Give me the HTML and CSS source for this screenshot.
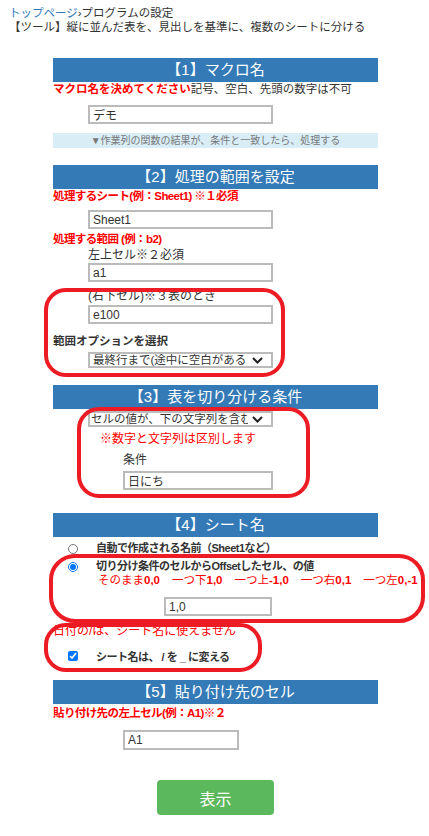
FILE: index.html
```html
<!DOCTYPE html>
<html>
	<head>
		<meta charset="UTF-8" />
		<title>縦に並んだ表を、見出しを基準に、複数のシートに分ける</title>
		<link rel="stylesheet" href="styles.css">
	</head>
	<body>
		<div class="crumb"><a href="javascript:void(0);">トップページ</a>›プログラムの設定</div>
		<div class="lead">【ツール】縦に並んだ表を、見出しを基準に、複数のシートに分ける</div>

		<form class="form" onsubmit="return false;">
			<!-- 1 -->
			<h2 class="sec-title">【1】マクロ名</h2>
			<p class="line"><span class="red-b">マクロ名を決めてください</span>記号、空白、先頭の数字は不可</p>
			<input type="text" class="txt w185 sheet-in" value="デモ">
			<div class="info">▼作業列の関数の結果が、条件と一致したら、処理する</div>

			<!-- 2 -->
			<h2 class="sec-title mt17">【2】処理の範囲を設定</h2>
			<p class="line red-b">処理するシート(例：Sheet1) ※１必須</p>
			<input type="text" class="txt w185 in-sheet" value="Sheet1">
			<p class="line red-b range-t">処理する範囲 (例：b2)</p>
			<p class="line sub lt">左上セル※２必須</p>
			<input type="text" class="txt w185 in-a1" value="a1">
			<p class="line sub rb">(右下セル)※３表のとき</p>
			<input type="text" class="txt w185 in-e" value="e100">
			<p class="line dark-b opt">範囲オプションを選択</p>
			<div class="sel w185 sel-range">
				<select>
					<option>最終行まで(途中に空白があると途中まで)</option>
				</select>
				<svg class="chev" width="11" height="7" viewBox="0 0 11 7"><path d="M1 1 L5.5 5.5 L10 1" fill="none" stroke="#222" stroke-width="2"/></svg>
			</div>

			<!-- 3 -->
			<h2 class="sec-title mt17">【3】表を切り分ける条件</h2>
			<div class="sel w185 sel-cond">
				<select>
					<option>セルの値が、下の文字列を含む</option>
				</select>
				<svg class="chev" width="11" height="7" viewBox="0 0 11 7"><path d="M1 1 L5.5 5.5 L10 1" fill="none" stroke="#222" stroke-width="2"/></svg>
			</div>
			<p class="line red warn">※数字と文字列は区別します</p>
			<p class="line cond-t">条件</p>
			<input type="text" class="txt in-cond" value="日にち">

			<!-- 4 -->
			<h2 class="sec-title mt23">【4】シート名</h2>
			<label class="opt-row r1"><input type="radio" name="sname">自動で作成される名前（Sheet1など）</label>
			<label class="opt-row r2"><input type="radio" name="sname" checked>切り分け条件のセルからOffsetしたセル、の値</label>
			<p class="line offsets"><span>そのまま</span><b>0,0</b><span>一つ下</span><b>1,0</b><span>一つ上</span><b>-1,0</b><span>一つ右</span><b>0,1</b><span>一つ左</span><b>0,-1</b></p>
			<input type="text" class="txt in-off" value="1,0">
			<p class="line red date-t">日付の/は、シート名に使えません</p>
			<label class="opt-row chk"><input type="checkbox" checked>シート名は、 / を _ に変える</label>

			<!-- 5 -->
			<h2 class="sec-title mt17">【5】貼り付け先のセル</h2>
			<p class="line red-b paste-t">貼り付け先の左上セル(例：A1)※２</p>
			<input type="text" class="txt in-paste" value="A1">
			<button type="submit" class="btn-show">表示</button>
		</form>

		<!-- 赤い囲み（注釈） -->
		<div class="mark m1"></div>
		<div class="mark m2"></div>
		<div class="mark m3"></div>
		<div class="mark m4"></div>
	</body>
</html>
```

FILE: styles.css
```css
* {
	margin: 0;
	padding: 0;
	box-sizing: border-box;
}

body {
	position: relative;
	width: 429px;
	min-height: 836px;
	font-family: "Liberation Sans", "Noto Sans CJK JP", sans-serif;
	font-size: 12px;
	color: #333;
	background: #fff;
}

.crumb,
.lead {
	padding-left: 9px;
	line-height: 14px;
	font-size: 11.5px;
	color: #333;
}

.crumb {
	padding-top: 6px;
}

.crumb a {
	color: #337ab7;
	text-decoration: none;
}

.form {
	width: 325px;
	margin: 24px 0 0 53px;
}

.sec-title {
	height: 24px;
	line-height: 24px;
	background: #337ab7;
	color: #fff;
	font-size: 15px;
	font-weight: normal;
	text-align: center;
}

.mt17 {
	margin-top: 17px;
}

.mt23 {
	margin-top: 23px;
}

.line {
	line-height: 14px;
	font-size: 11.5px;
	white-space: nowrap;
}

.red-b {
	color: #f00;
	font-weight: bold;
}

.line.red-b {
	letter-spacing: -0.6px;
}

.red {
	color: #f00;
}

.dark-b {
	font-weight: bold;
	color: #333;
}

.sub {
	padding-left: 35px;
	font-size: 12px;
}

.txt {
	display: block;
	height: 19px;
	border: 2px solid #bbb;
	padding: 0 3px;
	font-family: "Liberation Sans", "Noto Sans CJK JP", sans-serif;
	font-size: 12px;
	color: #333;
	outline: none;
}

.w185 {
	width: 185px;
	margin-left: 35px;
}

/* section 1 */
.sheet-in {
	margin-top: 9px;
}

.info {
	margin-top: 9px;
	height: 15px;
	line-height: 15px;
	background: #d9edf7;
	color: #777;
	font-size: 10px;
	text-align: center;
}

/* section 2 */
.in-sheet {
	margin-top: 7px;
}

.range-t {
	margin-top: 3px;
}

.lt {
	margin-top: 2px;
}

.in-a1 {
	margin-top: 1px;
}

.rb {
	margin-top: 7px;
}

.in-e {
	margin-top: 2px;
}

.opt {
	margin-top: 10px;
}

.sel {
	position: relative;
	height: 16px;
}

.sel select {
	display: block;
	width: 100%;
	height: 16px;
	border: 2px solid #bbb;
	border-radius: 0;
	background: #fff;
	padding: 0 23px 0 3px;
	font-family: "Liberation Sans", "Noto Sans CJK JP", sans-serif;
	font-size: 11.5px;
	line-height: 12px;
	color: #333;
	appearance: none;
	-webkit-appearance: none;
	outline: none;
}

.chev {
	position: absolute;
	right: 10px;
	top: 5px;
}

.sel-range {
	margin-top: 4px;
}

/* section 3 */
.sel-cond {
	margin-top: 2px;
}

.sel-cond select {
	padding-left: 1px;
}

.warn {
	margin-top: 5px;
	padding-left: 47px;
	font-size: 12px;
}

.cond-t {
	margin-top: 7px;
	padding-left: 70px;
	font-size: 12px;
}

.in-cond {
	margin: 4px 0 0 70px;
	width: 150px;
}

/* section 4 */
.opt-row {
	display: flex;
	align-items: center;
	height: 19px;
	font-size: 11px;
	letter-spacing: -0.5px;
	font-weight: bold;
	color: #333;
	white-space: nowrap;
}

.opt-row input {
	width: 10px;
	height: 10px;
	margin: 4px 18px 0 15px;
}

.r2 {
	height: 17px;
}

.offsets {
	padding-left: 45px;
	color: #f00;
	font-size: 11.5px;
}

.offsets span {
	margin-left: 12px;
	font-weight: normal;
}

.offsets span:first-child {
	margin-left: 0;
}

.offsets b {
	font-weight: bold;
}

.in-off {
	margin: 10px 0 0 111px;
	width: 108px;
}

.date-t {
	margin-top: 8px;
	font-size: 12px;
}

.chk {
	margin-top: 11px;
	height: 14px;
}

.chk input {
	margin: 0 18px 0 15px;
}

/* section 5 */
.paste-t {
	margin-top: 2px;
}

.in-paste {
	margin: 10px 0 0 70px;
	width: 116px;
	height: 20px;
}

.btn-show {
	display: block;
	margin: 30px 0 0 104px;
	width: 117px;
	height: 35px;
	border: none;
	border-radius: 4px;
	background: #5cb85c;
	color: #fff;
	font-family: "Noto Sans CJK JP", sans-serif;
	font-size: 16px;
	cursor: pointer;
}

/* 注釈の赤い囲み */
.mark {
	position: absolute;
	border: 4px solid #ed1c24;
	border-radius: 22px;
	pointer-events: none;
}

.m1 {
	left: 44px;
	top: 288px;
	width: 241px;
	height: 89px;
}

.m2 {
	left: 77px;
	top: 407px;
	width: 233px;
	height: 91px;
}

.m3 {
	left: 49px;
	top: 554px;
	width: 376px;
	height: 69px;
	border-radius: 26px;
}

.m4 {
	left: 44px;
	top: 623px;
	width: 218px;
	height: 49px;
}
```
